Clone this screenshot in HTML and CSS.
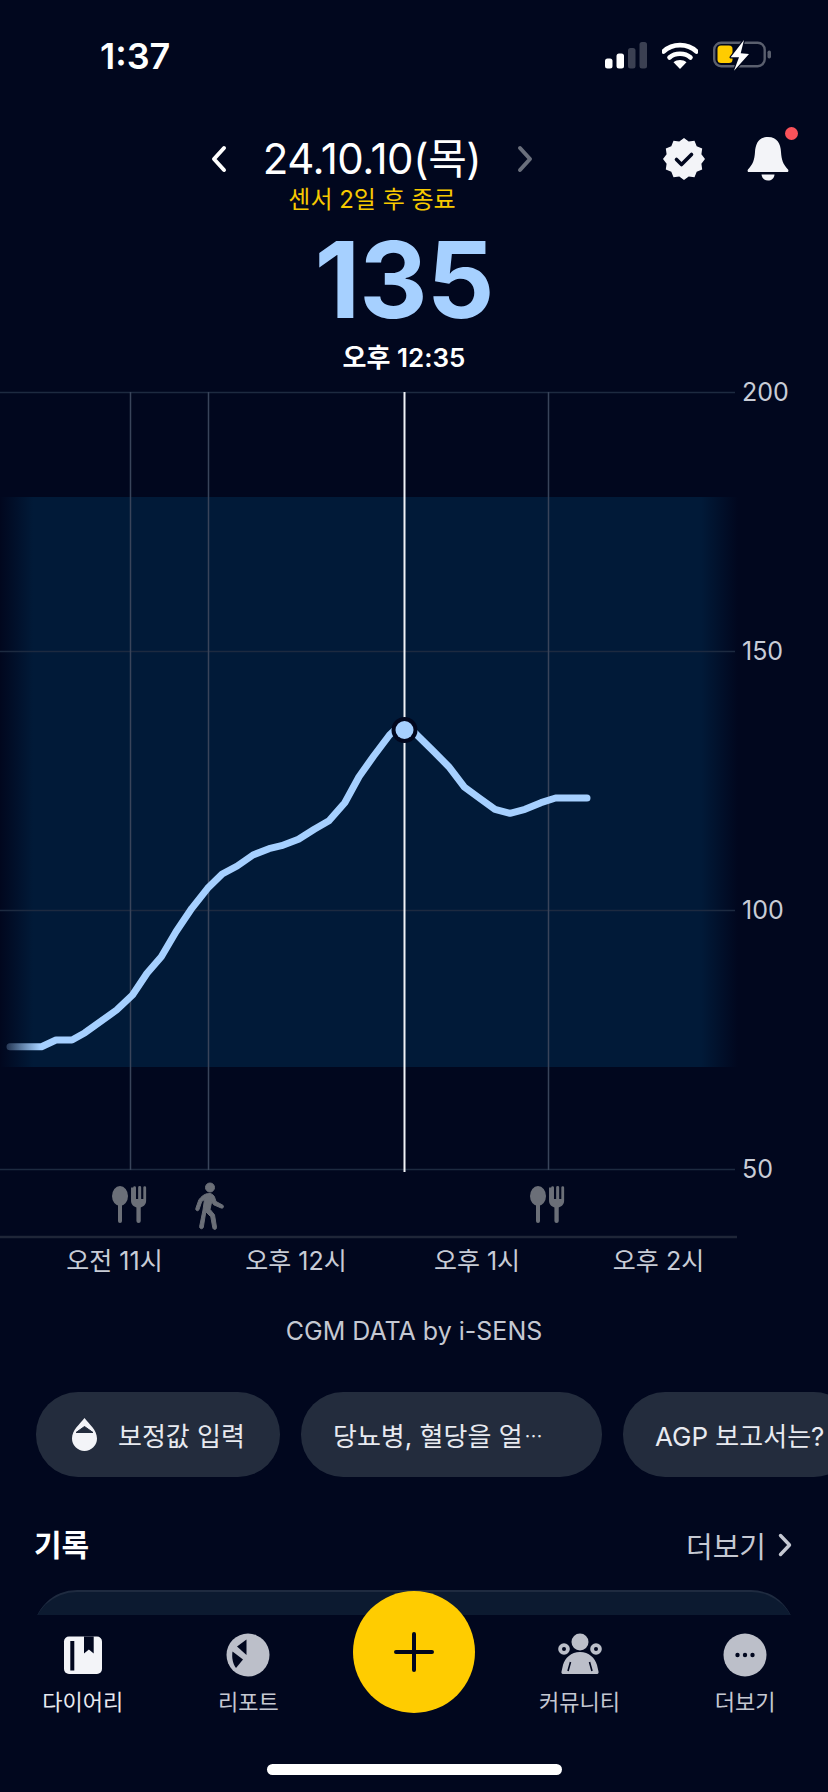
FILE: index.html
```html
<!DOCTYPE html>
<html lang="ko">
<head>
<meta charset="utf-8">
<title>CGM</title>
<link rel="stylesheet" href="styles.css">
</head>
<body>
<div class="screen">
  <div class="status">
    <span class="clock">1:37</span>
    <div class="status-icons">
      <svg class="ic-signal" width="42" height="27" viewBox="0 0 42 27"><rect x="0" y="16.500" width="7.500" height="10" rx="2.500" fill="#fff"/><rect x="11.500" y="11.500" width="7.500" height="15" rx="2.500" fill="#fff"/><rect x="23" y="6" width="7.500" height="20.500" rx="2.500" fill="#3b4052"/><rect x="34.500" y="0" width="7.500" height="26.500" rx="2.500" fill="#3b4052"/></svg>
      <svg class="ic-wifi" width="36" height="27" viewBox="0 0 36 27"><path d="M1.500 9.500C10.500 1 25.500 1 34.500 9.500" class="wifi-arc"/><path d="M7.500 15.500C13 10.500 23 10.500 28.500 15.500" class="wifi-arc"/><path d="M18 27l-6.500-6.800c3.500-3 9.500-3 13 0z" fill="#fff"/></svg>
      <svg class="ic-batt" width="59" height="31" viewBox="0 0 59 31"><rect x="1.200" y="2.700" width="50.500" height="23.500" rx="7" fill="none" stroke="#5a5f6e" stroke-width="2.400"/><rect x="4.500" y="5.500" width="15" height="17.500" rx="3.500" fill="#ffcc00"/><rect x="54.500" y="10.500" width="3.500" height="8" rx="1.700" fill="#5a5f6e"/><path d="M31 0L17.700 17.300H26L21 30.700 36 14l-8.300-.7z" fill="#fff" stroke="#01071e" stroke-width="2.400" stroke-linejoin="round" paint-order="stroke"/></svg>
    </div>
  </div>

  <header class="head-row">
    <div class="date-block">
      <div class="date-line">
        <svg class="chev" width="16" height="28" viewBox="0 0 16 28"><path d="M13 3L3 14l10 11" class="chev-path"/></svg>
        <span class="date">24.10.10(목)</span>
        <svg class="chev" width="16" height="28" viewBox="0 0 16 28"><path d="M3 3l10 11L3 25" class="chev-path dim"/></svg>
      </div>
      <div class="sensor">센서 2일 후 종료</div>
    </div>
    <div class="actions">
      <svg width="44" height="44" viewBox="-22 -22 44 44"><polygon points="0,-21 4.700,-17.400 10.500,-18.200 12.700,-12.700 18.200,-10.500 17.400,-4.700 21,0 17.400,4.700 18.200,10.500 12.700,12.700 10.500,18.200 4.700,17.400 0,21 -4.700,17.400 -10.500,18.200 -12.700,12.700 -18.200,10.500 -17.400,4.700 -21,0 -17.400,-4.700 -18.200,-10.500 -12.700,-12.700 -10.500,-18.200 -4.700,-17.400" fill="#f3f4f8"/><path d="M-7.500 0.500L-2.500 5.500 7.500 -4.500" fill="none" stroke="#01071e" stroke-width="3.600" stroke-linecap="round" stroke-linejoin="round"/></svg>
      <div class="bell-wrap">
        <svg width="44" height="44" viewBox="0 0 44 44"><path d="M22 0C12.500 0 9.500 7 9 15c-.5 8-2 12-7 17.500-.8 1-.4 2.500 1 2.500h38c1.400 0 1.800-1.500 1-2.500C37 27 35.500 23 35 15 34.500 7 31.500 0 22 0z" fill="#f3f4f8"/><path d="M15.500 37.500h13C28 41.500 25.500 43.500 22 43.500S16 41.500 15.500 37.500z" fill="#f3f4f8"/></svg>
        <span class="bell-dot"></span>
      </div>
    </div>
  </header>

  <div class="reading">135</div>
  <div class="read-time">오후 12:35</div>

  <svg class="chart" width="828" height="910" viewBox="0 370 828 910">
    <defs>
      <linearGradient id="band" x1="0" x2="738" y1="0" y2="0" gradientUnits="userSpaceOnUse">
        <stop offset="0" stop-color="#011a38" stop-opacity="0"/>
        <stop offset="0.045" stop-color="#011a38"/>
        <stop offset="0.95" stop-color="#011a38"/>
        <stop offset="1" stop-color="#011a38" stop-opacity="0"/>
      </linearGradient>
      <linearGradient id="stroke" x1="8" x2="40" y1="0" y2="0" gradientUnits="userSpaceOnUse">
        <stop offset="0" stop-color="#a6d0ff" stop-opacity="0.25"/>
        <stop offset="1" stop-color="#a6d0ff"/>
      </linearGradient>
    </defs>
    <rect x="0" y="497" width="738" height="570" fill="url(#band)"/>
    <g class="grid">
      <path d="M0 392.500H735M0 651.500H735M0 910.500H735M0 1169.500H735"/>
    </g>
    <path class="axis" d="M0 1237H737"/>
    <path class="vline" d="M130.500 392V1170M208.500 392V1170M548.500 392V1170"/>
    <path class="vline-now" d="M404.500 392V1172"/>
    <path class="glucose" stroke="url(#stroke)" d="M10 1046.700L41.500 1046.700 56 1040 72 1040 85 1032.700 116.600 1010 132.500 995 147 973.300 161.300 956.700 176 931.700 191.800 908.300 207.600 888.300 222.200 874 237.200 866 253 855 269 848.700 281.500 845.700 298.500 839.300 314.300 829.300 329 820.700 344.800 802.700 359 776.700 373.700 756 389.500 735 400 725"/>
    <path class="glucose solid" d="M408 725L417 735 433 750.700 448.800 766.700 464.600 787.300 479.600 798.300 495 809.300 510 813.300 525 809.300 541 802.700 555.600 798 587 798"/>
    <circle cx="404.500" cy="730" r="13" fill="#01071e"/>
    <circle cx="404.500" cy="730" r="9" fill="#a6d0ff"/>

    <text class="ytick" x="742" y="392">200</text>
    <text class="ytick" x="742" y="651">150</text>
    <text class="ytick" x="742" y="910">100</text>
    <text class="ytick" x="742" y="1169">50</text>

    <text class="xtick" x="114.500" y="1261">오전 11시</text>
    <text class="xtick" x="296" y="1261">오후 12시</text>
    <text class="xtick" x="477" y="1261">오후 1시</text>
    <text class="xtick" x="658.500" y="1261">오후 2시</text>

    <g class="marker" transform="translate(112 1186)">
      <ellipse cx="8" cy="10" rx="8" ry="10"/>
      <rect x="6" y="14" width="4" height="23" rx="2"/>
      <path transform="translate(-1.500 0) scale(1.080 1)" d="M19 1.500v13c0 4 2.500 6 5 7v13.500a2 2 0 0 0 4 0V21.500c2.500-1 5-3 5-7v-13a1 1 0 0 0-2.600 0V13h-2V1.500a1.200 1.200 0 0 0-2.800 0V13h-2V1.500a1.300 1.300 0 0 0-2.600 0z"/>
    </g>
    <g class="marker" transform="translate(530 1186)">
      <ellipse cx="8" cy="10" rx="8" ry="10"/>
      <rect x="6" y="14" width="4" height="23" rx="2"/>
      <path transform="translate(-1.500 0) scale(1.080 1)" d="M19 1.500v13c0 4 2.500 6 5 7v13.500a2 2 0 0 0 4 0V21.500c2.500-1 5-3 5-7v-13a1 1 0 0 0-2.600 0V13h-2V1.500a1.200 1.200 0 0 0-2.800 0V13h-2V1.500a1.300 1.300 0 0 0-2.600 0z"/>
    </g>
    <g class="marker walker" transform="translate(194 1183)">
      <circle cx="16" cy="4.500" r="4.500"/>
      <path d="M12 11c4-1.500 7 0 8.500 3l1.500 4.500 6.500 3.500c2 1 .8 3.800-1.300 3l-7.500-3.200-2-3-1.700 7.500 4.500 5.500 2 12.500c.3 2.500-3.200 3-3.700.5l-2-11-5-5-2.500 15.500c-.5 2.300-4 1.700-3.700-.7L9 27l1.500-10.500-2.800 2L5 26.500c-.7 2.200-3.800 1.200-3.200-1L4.800 17c2-3 4.500-5 7.200-6z"/>
    </g>
  </svg>

  <div class="credit">CGM DATA by i-SENS</div>

  <div class="chips">
    <div class="chip chip-drop">
      <svg class="drop" width="27" height="33" viewBox="0 0 27 33"><path d="M13.500 0C9 6 1 12 1 20.500A12.500 12.500 0 0 0 26 20.500C26 12 18 6 13.500 0z" fill="#f3f4f8"/><path d="M13.500 8.500L5 14.500h17z" fill="#232c3d" stroke="#232c3d" stroke-linejoin="round"/></svg>
      <span>보정값 입력</span>
    </div>
    <div class="chip chip-long">당뇨병, 혈당을 얼<span class="ell">…</span></div>
    <div class="chip">AGP 보고서는?</div>
  </div>

  <div class="section">
    <h2 class="section-title">기록</h2>
    <div class="more">
      <span>더보기</span>
      <svg width="14" height="24" viewBox="0 0 14 24"><path d="M2.500 2.500L11.500 12l-9 9.500" fill="none" stroke="#c5c8d2" stroke-width="3.400" stroke-linecap="round" stroke-linejoin="round"/></svg>
    </div>
  </div>
  <div class="card"></div>

  <nav class="tabbar">
    <div class="tab active">
      <svg width="44" height="44" viewBox="0 0 44 44"><rect x="3" y="3.500" width="38" height="37.500" rx="5" fill="#f3f4f8"/><rect x="9.300" y="8" width="4" height="29.500" fill="#01071e"/><path d="M23 3.500h9.700V20.500L27.900 16.500 23 20.500z" fill="#01071e"/></svg>
      <span>다이어리</span>
    </div>
    <div class="tab">
      <svg width="44" height="44" viewBox="-22 -22 44 44"><circle r="21.500" fill="#bcbfc9"/><polygon points="-1.500,-15.500 -11,-8.500 -1.500,0" fill="#01071e"/><path d="M-15.500 -3.500L-5 4.500-12 13C-15 9-16.500 3-15.500 -3.500z" fill="#01071e"/></svg>
      <span>리포트</span>
    </div>
    <div class="tab spacer"></div>
    <div class="tab">
      <svg width="44" height="44" viewBox="0 0 44 44"><circle cx="22" cy="9" r="8.500" fill="#bcbfc9"/><circle cx="6" cy="16" r="5.800" fill="#bcbfc9"/><circle cx="6" cy="16" r="2" fill="#01071e"/><circle cx="38" cy="16" r="5.800" fill="#bcbfc9"/><circle cx="38" cy="16" r="2" fill="#01071e"/><path d="M22 19c-9 0-15 6-17 13l-1.500 6.500c-.5 2 .8 2.500 2 2.500h33c1.200 0 2.500-.5 2-2.500L39 32c-2-7-8-13-17-13z" fill="#bcbfc9"/><path d="M12.500 29l-2.500 9M31.500 29l2.500 9" stroke="#01071e" stroke-width="1.600" fill="none"/></svg>
      <span>커뮤니티</span>
    </div>
    <div class="tab">
      <svg width="44" height="44" viewBox="-22 -22 44 44"><circle r="21.500" fill="#bcbfc9"/><circle cx="-7.500" r="2.200" fill="#01071e"/><circle r="2.200" fill="#01071e"/><circle cx="7.500" r="2.200" fill="#01071e"/></svg>
      <span>더보기</span>
    </div>
    <button class="fab" type="button" aria-label="추가">
      <svg width="40" height="40" viewBox="0 0 40 40"><path d="M20 2V38M2 20H38" stroke="#01071e" stroke-width="4" stroke-linecap="round"/></svg>
    </button>
    <div class="home-bar"></div>
  </nav>
</div>
</body>
</html>
```
FILE: styles.css
```css
* { box-sizing: border-box; }
html, body { margin: 0; padding: 0; background: #01071e; }
body { font-family: Inter, "Noto Sans CJK KR", sans-serif; color: #fff; }
.screen { position: relative; width: 828px; height: 1792px; overflow: hidden; background: #01071e; }

.status { height: 135px; padding: 36px 56px 0 100px; display: flex; justify-content: space-between; align-items: flex-start; }
.clock { font-size: 36px; line-height: 40px; font-weight: 600; letter-spacing: 0; }
.status-icons { display: flex; align-items: center; gap: 15px; margin-top: 4px; }
.wifi-arc { fill: none; stroke: #fff; stroke-width: 4.600; stroke-linecap: round; }

.head-row { display: flex; align-items: flex-start; padding-right: 38px; height: 80px; }
.date-block { width: 340px; margin-left: 202px; display: flex; flex-direction: column; align-items: center; }
.date-line { display: flex; align-items: center; justify-content: space-between; width: 322px; height: 46px; margin-top: 1px; }
.date { font-size: 42px; line-height: 46px; font-weight: 400; letter-spacing: -0.4px; white-space: nowrap; }
.chev-path { fill: none; stroke: #fff; stroke-width: 4; stroke-linecap: round; stroke-linejoin: round; }
.chev-path.dim { stroke: #6a6f7c; }
.sensor { margin-top: 2px; font-size: 24px; line-height: 32px; color: #f7c900; white-space: nowrap; }
.actions { margin-left: auto; display: flex; gap: 40px; align-items: flex-start; margin-top: 2px; }
.bell-wrap { position: relative; width: 44px; height: 44px; }
.bell-dot { position: absolute; right: -8px; top: -10px; width: 13px; height: 13px; border-radius: 50%; background: #f9525a; }

.reading { margin-top: 15px; height: 100px; padding-right: 20px; text-align: center; font-size: 106px; line-height: 100px; font-weight: 700; color: #a6d0ff; letter-spacing: -1px; }
.read-time { margin-top: 12px; height: 32px; padding-right: 20px; text-align: center; font-size: 26px; line-height: 32px; font-weight: 600; }

.chart { display: block; margin-top: -4px; }
.grid path { stroke: #1d2a40; stroke-width: 1.500; fill: none; }
.axis { stroke: #1f2638; stroke-width: 2.500; fill: none; }
.vline { stroke: #39445a; stroke-width: 1.500; fill: none; }
.vline-now { stroke: #f0f2f6; stroke-width: 2; fill: none; }
.glucose { fill: none; stroke-width: 7; stroke-linecap: round; stroke-linejoin: round; }
.glucose.solid { stroke: #a6d0ff; }
.ytick { font-size: 25px; fill: #c8ccd6; dominant-baseline: central; }
.xtick { font-size: 25px; fill: #c8ccd6; dominant-baseline: central; text-anchor: middle; }
.marker { fill: #6b6f78; }
.walker { stroke: #6b6f78; stroke-width: 1; }

.credit { margin-top: 36px; height: 30px; text-align: center; font-size: 25px; line-height: 30px; color: #c5c8d2; }

.chips { margin-top: 46px; padding-left: 36px; display: flex; gap: 21px; white-space: nowrap; }
.chip { flex: none; height: 85px; padding: 0 32px; border-radius: 42px; background: #232c3d; display: flex; align-items: center; font-size: 26px; color: #e8eaf0; }
.chip-drop { width: 244px; padding: 0 35px; gap: 20px; }
.chip-long { width: 301px; }
.ell { font-family: "Noto Sans CJK SC", sans-serif; font-size: 18px; margin-left: 2px; }

.section { margin-top: 48px; padding: 0 36px 0 34px; height: 40px; display: flex; justify-content: space-between; align-items: center; }
.section-title { margin: 0; font-size: 30px; line-height: 40px; font-weight: 700; }
.more { display: flex; align-items: center; gap: 12px; font-size: 29px; color: #c5c8d2; }

.card { margin: 25px 33px 0; height: 200px; border-radius: 44px 44px 0 0; background: #0c1a30; border-top: 2px solid #1f2b40; }

.tabbar { position: absolute; left: 0; right: 0; bottom: 0; height: 177px; background: #01071e; display: grid; grid-template-columns: repeat(5, 1fr); padding-top: 18px; align-items: start; }
.tab { display: flex; flex-direction: column; align-items: center; gap: 10px; font-size: 22px; line-height: 30px; color: #c5c8d2; }
.tab.active { color: #e8eaf0; }
.fab { position: absolute; left: 353px; top: -24px; width: 122px; height: 122px; border: 0; padding: 0; border-radius: 50%; background: #ffcc00; display: flex; align-items: center; justify-content: center; }
.home-bar { position: absolute; left: 267px; bottom: 17px; width: 295px; height: 11px; border-radius: 6px; background: #fff; }
```
